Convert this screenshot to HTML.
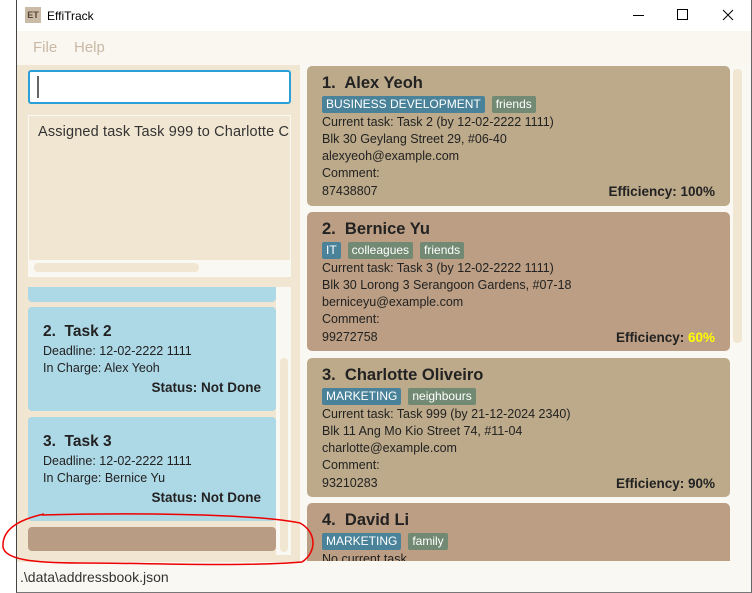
<!DOCTYPE html>
<html><head><style>
*{margin:0;padding:0;box-sizing:border-box}
body{width:752px;height:593px;overflow:hidden;background:#fff;font-family:"Liberation Sans",sans-serif;position:relative;color:#222}
.abs{position:absolute}
.t{font-size:13px;line-height:17px;white-space:nowrap}
.card{position:absolute;left:307px;width:423px;border-radius:5px;padding:6px 15px}
.name{font-size:16.5px;font-weight:bold;line-height:22px;color:#222}
.tag{display:inline-block;font-size:12px;color:#fff;padding:1px 4px;margin-right:7px;line-height:15px;border-radius:2px}
.b{background:#4a8399}.g{background:#728a73}
.ln{font-size:12.5px;line-height:17px;color:#222}
.task{position:absolute;left:28px;width:248px;background:#add8e6;border-radius:4px;padding:14px 15px}
</style></head><body>
<div class="abs" style="left:16px;top:0;width:736px;height:593px;border-left:1px solid #444;border-right:1px solid #666;border-bottom:1px solid #777"></div>
<div class="abs" style="left:25px;top:7px;width:16px;height:16px;background:#c9bba5;font-size:9px;font-weight:bold;color:#5a4634;text-align:center;line-height:16px">ET</div>
<div class="abs t" style="left:47px;top:8px;font-size:12px;color:#000">EffiTrack</div>
<div class="abs" style="left:633px;top:15px;width:11px;height:1px;background:#000"></div>
<div class="abs" style="left:677px;top:9px;width:11px;height:11px;border:1px solid #000"></div>
<svg class="abs" style="left:722px;top:9px" width="12" height="12"><path d="M1 1L11 11M11 1L1 11" stroke="#000" stroke-width="1"/></svg>
<div class="abs" style="left:17px;top:31px;width:734px;height:34px;background:#faf7f0"></div>
<div class="abs t" style="left:33px;top:39px;font-size:15px;color:#c8b8a5">File</div>
<div class="abs t" style="left:74px;top:39px;font-size:15px;color:#c8b8a5">Help</div>
<div class="abs" style="left:17px;top:65px;width:283px;height:497px;background:#f1e6d1"></div>
<div class="abs" style="left:28px;top:70px;width:263px;height:34px;background:#fff;border:2px solid #2a9fd8;border-radius:3px"></div>
<div class="abs" style="left:37px;top:76px;width:2px;height:22px;background:#666"></div>
<div class="abs" style="left:28px;top:115px;width:263px;height:162px;background:#f1e6d1;border:1px solid #faf8f3"></div>
<div class="abs t" style="left:38px;top:124px;font-size:14.5px;color:#333;letter-spacing:0.15px">Assigned task Task 999 to Charlotte C</div>
<div class="abs" style="left:29px;top:260px;width:261px;height:16px;background:#faf8f3"></div>
<div class="abs" style="left:34px;top:263px;width:165px;height:9px;background:#f1e6d1;border-radius:4px"></div>
<div class="abs" style="left:276px;top:287px;width:15px;height:268px;background:#faf8f3"></div>
<div class="abs" style="left:280px;top:358px;width:8px;height:194px;background:#f1e6d1;border-radius:4px"></div>
<div class="abs" style="left:28px;top:287px;width:248px;height:15px;background:#add8e6;border-radius:0 0 4px 4px"></div>
<div class="task" style="top:307px;height:104px">
<div class="name" style="font-size:15.5px">2.&nbsp; Task 2</div>
<div class="ln">Deadline: 12-02-2222 1111</div>
<div class="ln">In Charge: Alex Yeoh</div>
<div class="ln" style="text-align:right;font-weight:bold;font-size:13.5px;line-height:22px">Status: Not Done</div>
</div>
<div class="task" style="top:417px;height:104px">
<div class="name" style="font-size:15.5px">3.&nbsp; Task 3</div>
<div class="ln">Deadline: 12-02-2222 1111</div>
<div class="ln">In Charge: Bernice Yu</div>
<div class="ln" style="text-align:right;font-weight:bold;font-size:13.5px;line-height:22px">Status: Not Done</div>
</div>
<div class="abs" style="left:28px;top:527px;width:248px;height:24px;background:#b99c84;border-radius:4px"></div>
<div class="abs" style="left:17px;top:562px;width:734px;height:30px;background:#faf8f3"></div>
<div class="abs t" style="left:20px;top:569px;font-size:14px;color:#333">.\data\addressbook.json</div>
<div class="abs" style="left:300px;top:65px;width:451px;height:497px;background:#faf8f3"></div>
<div class="abs" style="left:733px;top:69px;width:9px;height:274px;background:#f1e6d1;border-radius:4px"></div>
<div class="card" style="top:66px;height:140px;background:#bcaa8a">
<div class="name">1.&nbsp; Alex Yeoh</div>
<div style="margin:1px 0"><span class="tag b">BUSINESS DEVELOPMENT</span><span class="tag g">friends</span></div>
<div class="ln">Current task: Task 2 (by 12-02-2222 1111)</div>
<div class="ln">Blk 30 Geylang Street 29, #06-40</div>
<div class="ln">alexyeoh@example.com</div>
<div class="ln">Comment:</div>
<div class="ln" style="display:flex;justify-content:space-between;line-height:19px"><span>87438807</span><b style="font-size:13.5px">Efficiency: 100%</b></div>
</div>
<div class="card" style="top:212px;height:139px;background:#bb9e83">
<div class="name">2.&nbsp; Bernice Yu</div>
<div style="margin:1px 0"><span class="tag b">IT</span><span class="tag g">colleagues</span><span class="tag g">friends</span></div>
<div class="ln">Current task: Task 3 (by 12-02-2222 1111)</div>
<div class="ln">Blk 30 Lorong 3 Serangoon Gardens, #07-18</div>
<div class="ln">berniceyu@example.com</div>
<div class="ln">Comment:</div>
<div class="ln" style="display:flex;justify-content:space-between;line-height:19px"><span>99272758</span><b style="font-size:13.5px">Efficiency: <span style="color:#ffff00">60%</span></b></div>
</div>
<div class="card" style="top:358px;height:139px;background:#bcaa8a">
<div class="name">3.&nbsp; Charlotte Oliveiro</div>
<div style="margin:1px 0"><span class="tag b">MARKETING</span><span class="tag g">neighbours</span></div>
<div class="ln">Current task: Task 999 (by 21-12-2024 2340)</div>
<div class="ln">Blk 11 Ang Mo Kio Street 74, #11-04</div>
<div class="ln">charlotte@example.com</div>
<div class="ln">Comment:</div>
<div class="ln" style="display:flex;justify-content:space-between;line-height:19px"><span>93210283</span><b style="font-size:13.5px">Efficiency: 90%</b></div>
</div>
<div class="card" style="top:503px;height:58px;background:#bb9e83;overflow:hidden;border-radius:5px 5px 0 0">
<div class="name">4.&nbsp; David Li</div>
<div style="margin:1px 0"><span class="tag b">MARKETING</span><span class="tag g">family</span></div>
<div class="ln">No current task</div>
</div>
<svg class="abs" style="left:0;top:505px" width="320" height="65"><path d="M42 10C120 8 250 8 300 18C318 28 316 48 302 57C240 62 150 58 80 58C30 58 5 54 3 42C2 28 12 16 44 9" fill="none" stroke="#e00" stroke-width="1.5"/></svg>
</body></html>
